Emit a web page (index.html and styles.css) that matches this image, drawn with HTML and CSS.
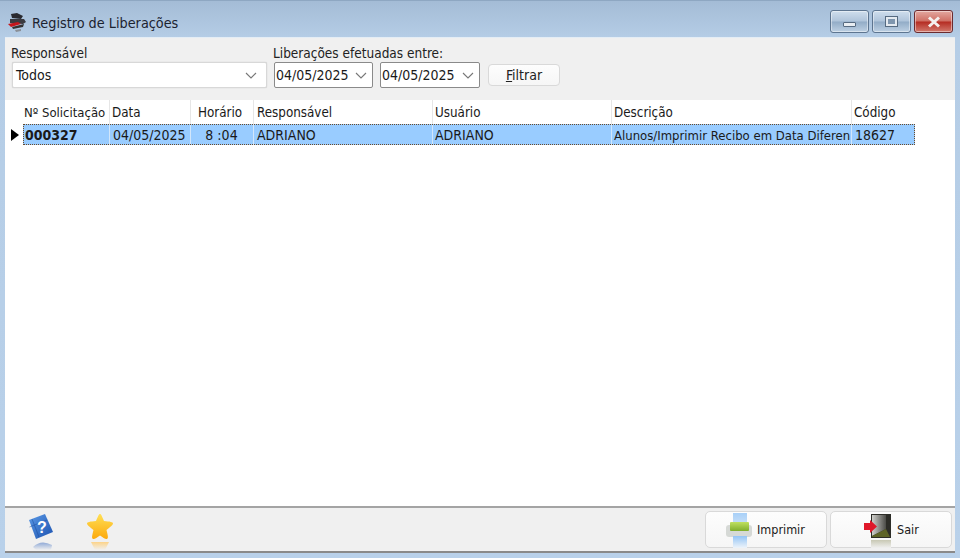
FILE: index.html
```html
<!DOCTYPE html>
<html lang="pt">
<head>
<meta charset="utf-8">
<title>Registro de Liberações</title>
<link rel="stylesheet" href="styles.css">
</head>
<body>
<div class="window">
  <div class="titlebar">
    <svg class="app-icon" viewBox="0 0 20 20" width="20" height="20">
      <path d="M4 1 L10 0 L16 3 L14 6 L5 5Z" fill="#2a2a30"/>
      <path d="M3 6 L17 6 L19 9 L16 11 L3 10Z" fill="#3a3a40"/>
      <path d="M1 11 L11 9 L14 11 L4 14Z" fill="#c3161c"/>
      <path d="M5 14 L17 11 L16 14 L6 16Z" fill="#333"/>
      <path d="M8 17 L14 16 L14 18 L9 19Z" fill="#8a8f96"/>
    </svg>
    <span class="title">Registro de Liberações</span>
    <div class="win-buttons">
      <div class="win-btn"><span class="glyph-min"></span></div>
      <div class="win-btn"><span class="glyph-max"></span></div>
      <div class="win-btn close"><svg viewBox="0 0 14 12" width="14" height="12"><path d="M2 1.500 L12 10.500 M12 1.500 L2 10.500" stroke="#f4f0ee" stroke-width="3"/></svg></div>
    </div>
  </div>
  <div class="client">
    <div class="filters">
      <div class="field resp">
        <label>Responsável</label>
        <div class="combo flat"><span>Todos</span><svg class="chev" viewBox="0 0 12 7" width="12" height="7"><path d="M1 1 L6 6 L11 1" fill="none" stroke="#777" stroke-width="1.1"/></svg></div>
      </div>
      <div class="field">
        <label>Liberações efetuadas entre:</label>
        <div class="dates">
          <div class="combo date"><span>04/05/2025</span><svg class="chev" viewBox="0 0 12 7" width="12" height="7"><path d="M1 1 L6 6 L11 1" fill="none" stroke="#777" stroke-width="1.1"/></svg></div>
          <div class="combo date"><span>04/05/2025</span><svg class="chev" viewBox="0 0 12 7" width="12" height="7"><path d="M1 1 L6 6 L11 1" fill="none" stroke="#777" stroke-width="1.1"/></svg></div>
          <button class="filter-btn"><u>F</u>iltrar</button>
        </div>
      </div>
    </div>
    <div class="grid-area">
      <div class="grid">
        <div class="row head">
          <div class="ind"></div>
          <div class="c c1">Nº Solicitação</div>
          <div class="c c2">Data</div>
          <div class="c c3 center">Horário</div>
          <div class="c c4">Responsável</div>
          <div class="c c5">Usuário</div>
          <div class="c c6">Descrição</div>
          <div class="c c7">Código</div>
        </div>
        <div class="row data">
          <div class="ind"><span class="arrow"></span></div>
          <div class="sel">
            <div class="c c1 bold">000327</div>
            <div class="c c2 pad">04/05/2025</div>
            <div class="c c3 center">8 :04</div>
            <div class="c c4">ADRIANO</div>
            <div class="c c5">ADRIANO</div>
            <div class="c c6">Alunos/Imprimir Recibo em Data Diferen</div>
            <div class="c c7 pad">18627</div>
          </div>
        </div>
      </div>
    </div>
    <div class="bottom">
      <div class="tools">
        <svg class="tool" viewBox="0 0 28 36" width="28" height="36">
          <defs>
            <linearGradient id="hb" x1="0" y1="0" x2="1" y2="1"><stop offset="0" stop-color="#5b9ae6"/><stop offset="1" stop-color="#1c52b0"/></linearGradient>
            <linearGradient id="hr" x1="0" y1="0" x2="0" y2="1"><stop offset="0" stop-color="#8fa9d6"/><stop offset="1" stop-color="#f0f0f0"/></linearGradient>
          </defs>
          <path d="M2 6 L18 0 L26 18 L9 25Z" fill="url(#hb)"/>
          <path d="M5 5 L12 23 M2.500 13 L20 6" stroke="#1a4a9a" stroke-width=".8" opacity=".6"/>
          <text x="10" y="19" font-family="Liberation Sans" font-weight="700" font-size="16" fill="#fff">?</text>
          <path d="M6 33 Q14 25 25 31 L24 36 L9 36Z" fill="url(#hr)"/>
        </svg>
        <svg class="tool" viewBox="0 0 28 36" width="28" height="36">
          <defs>
            <linearGradient id="st" x1="0" y1="0" x2="0" y2="1"><stop offset="0" stop-color="#ffdf55"/><stop offset="1" stop-color="#fca90c"/></linearGradient>
            <linearGradient id="sr" x1="0" y1="0" x2="0" y2="1"><stop offset="0" stop-color="#fcd388"/><stop offset="1" stop-color="#f0f0f0"/></linearGradient>
          </defs>
          <path d="M14 0 C15 0 15.500 1 18 7 C24 7.500 27 8 27 9.500 C27 11 24 13 20.500 16 C22 22 22.500 24 21 25 C19.500 25.500 17 23.500 14 21.500 C11 23.500 8.500 25.500 7 25 C5.500 24 6 22 7.500 16 C4 13 1 11 1 9.500 C1 8 4 7.500 10 7 C12.500 1 13 0 14 0Z" fill="url(#st)"/>
          <path d="M5 28 H23 L19 36 H9Z" fill="url(#sr)"/>
        </svg>
      </div>
      <div class="actions">
        <button class="action print">
          <svg viewBox="0 0 26 36" width="26" height="36">
            <defs>
              <linearGradient id="pg" x1="0" y1="0" x2="0" y2="1"><stop offset="0" stop-color="#c0e060"/><stop offset="1" stop-color="#7fae2c"/></linearGradient>
              <linearGradient id="pp" x1="0" y1="0" x2="0" y2="1"><stop offset="0" stop-color="#a8d0f8"/><stop offset="1" stop-color="#c4def8"/></linearGradient>
              <linearGradient id="pr" x1="0" y1="0" x2="0" y2="1"><stop offset="0" stop-color="#93c4f5"/><stop offset="1" stop-color="#eef4fa"/></linearGradient>
            </defs>
            <rect x="7" y="1" width="14" height="10" fill="url(#pp)"/>
            <rect x="0" y="13" width="26" height="12" rx="3" fill="#d6d9d6"/>
            <rect x="4" y="10" width="19" height="9" rx="1" fill="url(#pg)"/>
            <rect x="7" y="24" width="14" height="12" fill="url(#pr)"/>
          </svg>
          <span>Imprimir</span>
        </button>
        <button class="action exit">
          <svg viewBox="0 0 28 36" width="28" height="36">
            <defs>
              <linearGradient id="dg" x1="0" y1="0" x2="1" y2="0"><stop offset="0" stop-color="#d0d0cc"/><stop offset="1" stop-color="#4c4c48"/></linearGradient>
              <linearGradient id="dr" x1="0" y1="0" x2="0" y2="1"><stop offset="0" stop-color="#c8c8b4"/><stop offset="1" stop-color="#f0f0f0"/></linearGradient>
            </defs>
            <rect x="7" y="2" width="20" height="24" fill="#2d2d28"/>
            <path d="M8 3 H22 V17 L8 24Z" fill="url(#dg)"/>
            <path d="M8 24 L22 17 L26 25 H8Z" fill="#5d6326"/>
            <path d="M0 11 H6 V8 L13 14.500 L6 21 V18 H0Z" fill="#e0182a"/>
            <rect x="7" y="28" width="20" height="8" fill="url(#dr)"/>
          </svg>
          <span>Sair</span>
        </button>
      </div>
    </div>
  </div>
</div>
</body>
</html>
```
FILE: styles.css
```css
* { box-sizing: border-box; }
html, body { margin: 0; height: 100%; }
body { font-family: "DejaVu Sans", "Noto Sans", sans-serif; font-stretch: condensed; font-size: 12px; color: #1a1a1a; overflow: hidden; }
.window {
  width: 960px; height: 558px; display: flex; flex-direction: column;
  padding: 0 5px 5px 5px;
  background: linear-gradient(#a4bcd6 0, #b5cde6 37px, #b9d1ea 100%);
  border-top: 1px solid #8ea7c2;
}
.titlebar { height: 36px; flex: none; display: flex; align-items: flex-start; padding: 12px 0 0 2px; }
.app-icon { flex: none; margin-right: 5px; }
.title { font-size: 14.3px; line-height: 20px; color: #1c2330; }
.win-buttons { margin-left: auto; display: flex; gap: 3px; margin-top: -3px; margin-right: 2px; }
.win-btn {
  width: 39px; height: 23px; border: 1px solid #5d7590; border-radius: 3px;
  display: flex; align-items: center; justify-content: center;
  background: linear-gradient(#cfdeed 0, #afc4da 48%, #92acc7 52%, #bdd0e3 100%);
  box-shadow: inset 0 0 0 1px rgba(255,255,255,.45);
}
.win-btn.close { border-color: #6b2b2f; background: linear-gradient(#e3a8a0 0, #cf6f64 48%, #b52c22 52%, #d27a6e 100%); }
.glyph-min { width: 13px; height: 5px; margin-top: 5px; background: #e8edf2; border: 1px solid #566a80; border-radius: 1px; }
.glyph-max { width: 13px; height: 11px; border: 3px solid #e4eaf0; outline: 1px solid #566a80; outline-offset: -1px; background: #7f96ae; }
.client {
  flex: 1; min-height: 0; display: flex; flex-direction: column;
  background: #f0f0f0; border-bottom: 2px solid #8a8a8a; box-shadow: inset 0 1px 0 #e4edf5;
}
.filters { height: 63px; flex: none; display: flex; gap: 6px; padding: 8px 0 0 6px; }
.field { display: flex; flex-direction: column; }
.field label { font-size: 13.5px; line-height: 17px; color: #222; }
.resp { width: 256px; }
.combo {
  height: 26px; display: flex; align-items: center; justify-content: space-between;
  background: #fff; padding: 0 4px 0 3px; font-size: 14px; border: 1px solid #a8a8a8; border-radius: 2px;
}
.combo.flat { margin-left: 1px; border-color: #d8d8d8; box-shadow: 0 0 1px #bbb; padding-left: 3px; padding-right: 9px; }
.combo.date { width: 99px; border-color: #8a8a8a; padding-left: 1px; padding-right: 5px; }
.combo.date + .combo.date { width: 100px; }
.dates { display: flex; gap: 7px; align-items: center; margin-left: 1px; }
.filter-btn {
  width: 72px; height: 22px; margin-left: 1px; font: inherit; font-size: 14px; color: #222;
  background: linear-gradient(#fdfdfd, #f6f6f6); border: 1px solid #d9d9d9; border-radius: 4px; padding: 0;
}
.grid-area { flex: 1; min-height: 0; background: #fff; border-bottom: 2px solid #a4a4a4; }
.row { display: flex; width: 910px; }
.head { height: 24px; align-items: stretch; }
.ind { width: 18px; flex: none; display: flex; align-items: center; padding-left: 6px; }
.sel {
  display: flex; flex: 1; height: 21px; background: #99ccff;
  outline: 1px dotted #6a4a2a; outline-offset: -1px;
}
.data { height: 21px; }
.arrow { width: 0; height: 0; border-left: 8px solid #000; border-top: 6px solid transparent; border-bottom: 6px solid transparent; }
.c { flex: none; padding-left: 3px; white-space: nowrap; overflow: hidden; border-right: 1px solid #e6e6e6; line-height: 25px; font-size: 13.3px; }
.head .c1 { padding-left: 1px; font-size: 13px; }
.head .c2 { padding-left: 2px; }
.head .c3 { padding-left: 0; padding-right: 4px; }
.head .c5, .head .c6, .head .c7 { padding-left: 2px; }
.data .c { line-height: 23px; border-right-color: #d2e6fa; font-size: 14px; }
.c1 { width: 87px; }
.c2 { width: 81px; }
.c3 { width: 63px; }
.c4 { width: 179px; }
.c5 { width: 179px; }
.c6 { width: 240px; }
.c7 { width: 63px; border-right: 0; }
.data .c5, .data .c6 { padding-left: 2px; }
.data .c6 { font-size: 13px; }
.center { text-align: center; }
.data .bold { font-weight: 700; font-size: 14px; padding-left: 2px; }
.data .c3 { padding-left: 0; padding-right: 1px; }
.pad { padding-left: 3px; }
.bottom { height: 43px; flex: none; display: flex; align-items: center; justify-content: space-between; padding: 0 3px 0 0; }
.tools { display: flex; gap: 31px; padding-left: 22px; align-items: flex-start; margin-top: 5px; }
.tool { display: block; }
.actions { display: flex; gap: 3px; }
.action {
  width: 122px; height: 37px; display: flex; align-items: center; gap: 5px;
  font: inherit; font-size: 12.5px; color: #1a1a1a;
  background: linear-gradient(#fdfdfd, #f6f6f6); border: 1px solid #d9d9d9; border-radius: 5px;
}
.action svg { flex: none; }
.print { padding: 0 0 0 20px; }
.exit { padding: 0 0 0 33px; }
```
